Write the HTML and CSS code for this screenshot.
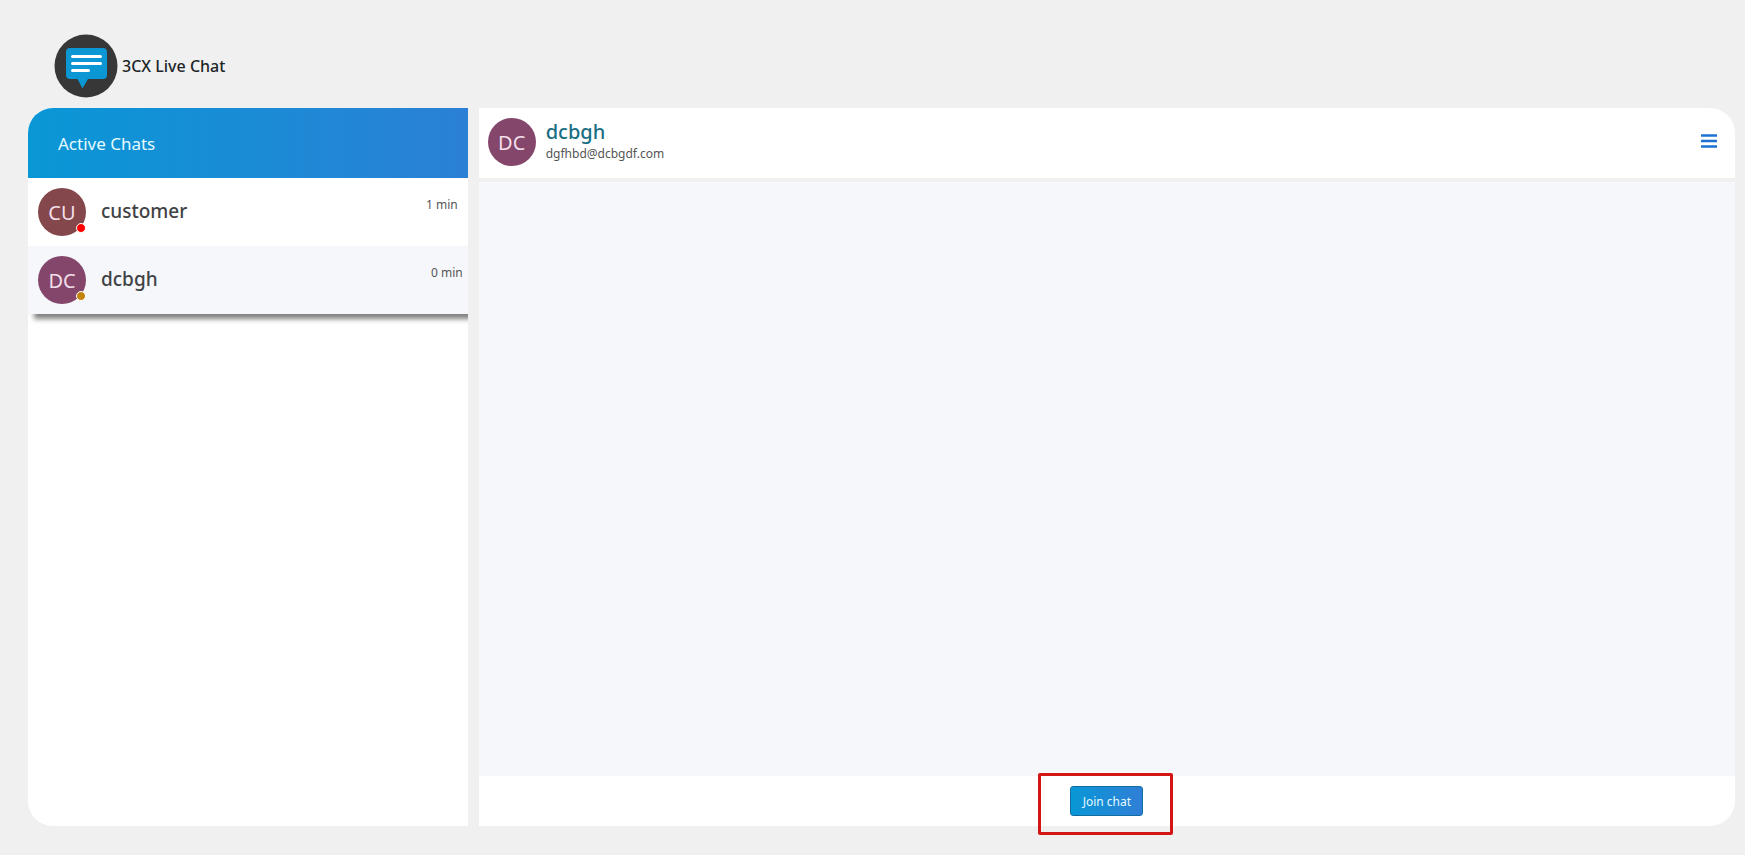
FILE: index.html
```
<!DOCTYPE html>
<html lang="en">
<head>
    <meta charset="UTF-8">
    <meta name="viewport" content="width=device-width, initial-scale=1.0">
    <title>3CX Live Chat</title>
    <link rel="stylesheet" href="styles.css">
</head>
<body>
    <header class="brand">
        <svg class="brand-logo" viewBox="0 0 64 64" aria-hidden="true">
            <circle cx="32" cy="32" r="31.5" fill="#373737"/>
            <path d="M16 14h33a4 4 0 0 1 4 4v23a4 4 0 0 1-4 4H34l-5.500 9.500L23.500 45H16a4 4 0 0 1-4-4V18a4 4 0 0 1 4-4z" fill="#0b96d4"/>
            <path d="M18.500 22.500h28M18.500 29.500h28M18.500 36.500h16" stroke="#fff" stroke-width="3" stroke-linecap="round"/>
        </svg>
        <span>3CX Live Chat</span>
    </header>

    <main class="chat">
        <section class="sidebar">
            <h1 class="sidebar-header">Active Chats</h1>
            <ul class="chat-list">
                <li class="chat-item">
                    <div class="avatar avatar-cu">CU<span class="status status-busy"></span></div>
                    <span class="chat-name">customer</span>
                    <span class="chat-time">1 min</span>
                </li>
                <li class="chat-item active">
                    <div class="avatar avatar-dc">DC<span class="status status-away"></span></div>
                    <span class="chat-name">dcbgh</span>
                    <span class="chat-time">0 min</span>
                </li>
            </ul>
        </section>

        <section class="conversation">
            <div class="conversation-header">
                <div class="avatar avatar-dc">DC</div>
                <div class="contact">
                    <h2 class="contact-name">dcbgh</h2>
                    <div class="contact-email">dgfhbd@dcbgdf.com</div>
                </div>
                <button class="menu-button" type="button" aria-label="Menu">
                    <svg viewBox="0 0 16 14" width="16" height="14" aria-hidden="true">
                        <path d="M0 1.500h16M0 7h16M0 12.500h16" stroke="#1c72d0" stroke-width="2.500"/>
                    </svg>
                </button>
            </div>
            <div class="messages"></div>
            <div class="conversation-footer">
                <div class="join">
                    <button class="join-button" type="button">Join chat</button>
                    <div class="highlight"></div>
                </div>
            </div>
        </section>
    </main>
</body>
</html>
```
FILE: styles.css
```
* {
    box-sizing: border-box;
}
body {
    display: flex;
    flex-direction: column;
    min-height: 100vh;
    margin: 0;
    padding: 34px 10px 29px 28px;
    font-family: "Noto Sans", "Open Sans", sans-serif;
    font-size: 16px;
    color: #212529;
    background-color: #f0f0f0;
}
h1, h2, ul {
    margin: 0;
    padding: 0;
}
button {
    font-family: inherit;
    cursor: pointer;
}
.brand {
    display: flex;
    align-items: center;
    gap: 4px;
    padding: 0 26px 10px;
    font-weight: 500;
}
.brand-logo {
    width: 64px;
    height: 64px;
}
.chat {
    flex: 1;
    display: grid;
    grid-template-columns: 35fr 100fr;
    gap: 11px;
}
.sidebar {
    overflow: hidden;
    background: #fff;
    border-radius: 25px 0 0 25px;
}
.sidebar-header {
    display: flex;
    align-items: center;
    height: 70px;
    padding: 0 30px;
    font-size: 17px;
    font-weight: 400;
    color: #e4fbff;
    background: linear-gradient(to right, #0997d6, #2b80d6);
}
.chat-list {
    list-style: none;
}
.chat-item {
    display: flex;
    height: 68px;
    padding: 10px;
}
.chat-item.active {
    padding-right: 5px;
    background: #f5f7fb;
    box-shadow: 6px 5px 5px 0 #808080;
}
.avatar {
    position: relative;
    display: flex;
    flex: none;
    align-items: center;
    justify-content: center;
    width: 48px;
    height: 48px;
    border-radius: 50%;
    font-size: 20px;
    color: #f3dfea;
}
.avatar-cu {
    background: #84474b;
}
.avatar-dc {
    background: #84476b;
}
.status {
    position: absolute;
    right: 0;
    bottom: 3px;
    width: 10px;
    height: 10px;
    border: 1px solid #fff;
    border-radius: 50%;
}
.status-busy {
    background: #f00;
}
.status-away {
    background: #c4830c;
}
.chat-name {
    flex: 1;
    padding-left: 15px;
    font-size: 19px;
    font-weight: 500;
    line-height: 46px;
    color: #404345;
}
.chat-time {
    font-size: 12px;
    line-height: 34px;
    color: #555;
}
.conversation {
    display: flex;
    flex-direction: column;
    background: #fff;
    border-radius: 0 25px 25px 0;
}
.conversation-header {
    display: flex;
    align-items: flex-start;
    height: 74px;
    padding: 10px 18px 0 9px;
    border-bottom: 4px solid #f0f0f0;
}
.contact {
    flex: 1;
    padding-left: 10px;
}
.contact-name {
    font-size: 20px;
    font-weight: 500;
    line-height: 28px;
    color: #1b6f83;
}
.contact-email {
    font-size: 12px;
    line-height: 16px;
    color: #555;
}
.menu-button {
    display: flex;
    margin-top: 16px;
    padding: 0;
    background: none;
    border: none;
}
.messages {
    flex: 1;
    background: #f5f7fb;
}
.conversation-footer {
    display: flex;
    align-items: center;
    justify-content: center;
    height: 50px;
}
.join {
    position: relative;
}
.join-button {
    display: block;
    width: 73px;
    height: 30px;
    padding: 0;
    font-size: 12px;
    color: #e4fbff;
    background: linear-gradient(to right, #0997d6, #2f7fd6);
    border: 1px solid #126da3;
    border-radius: 3px;
}
.highlight {
    position: absolute;
    inset: -13px -30px -19px -32px;
    border: 3px solid #d31515;
    border-radius: 2px;
    pointer-events: none;
}
```
